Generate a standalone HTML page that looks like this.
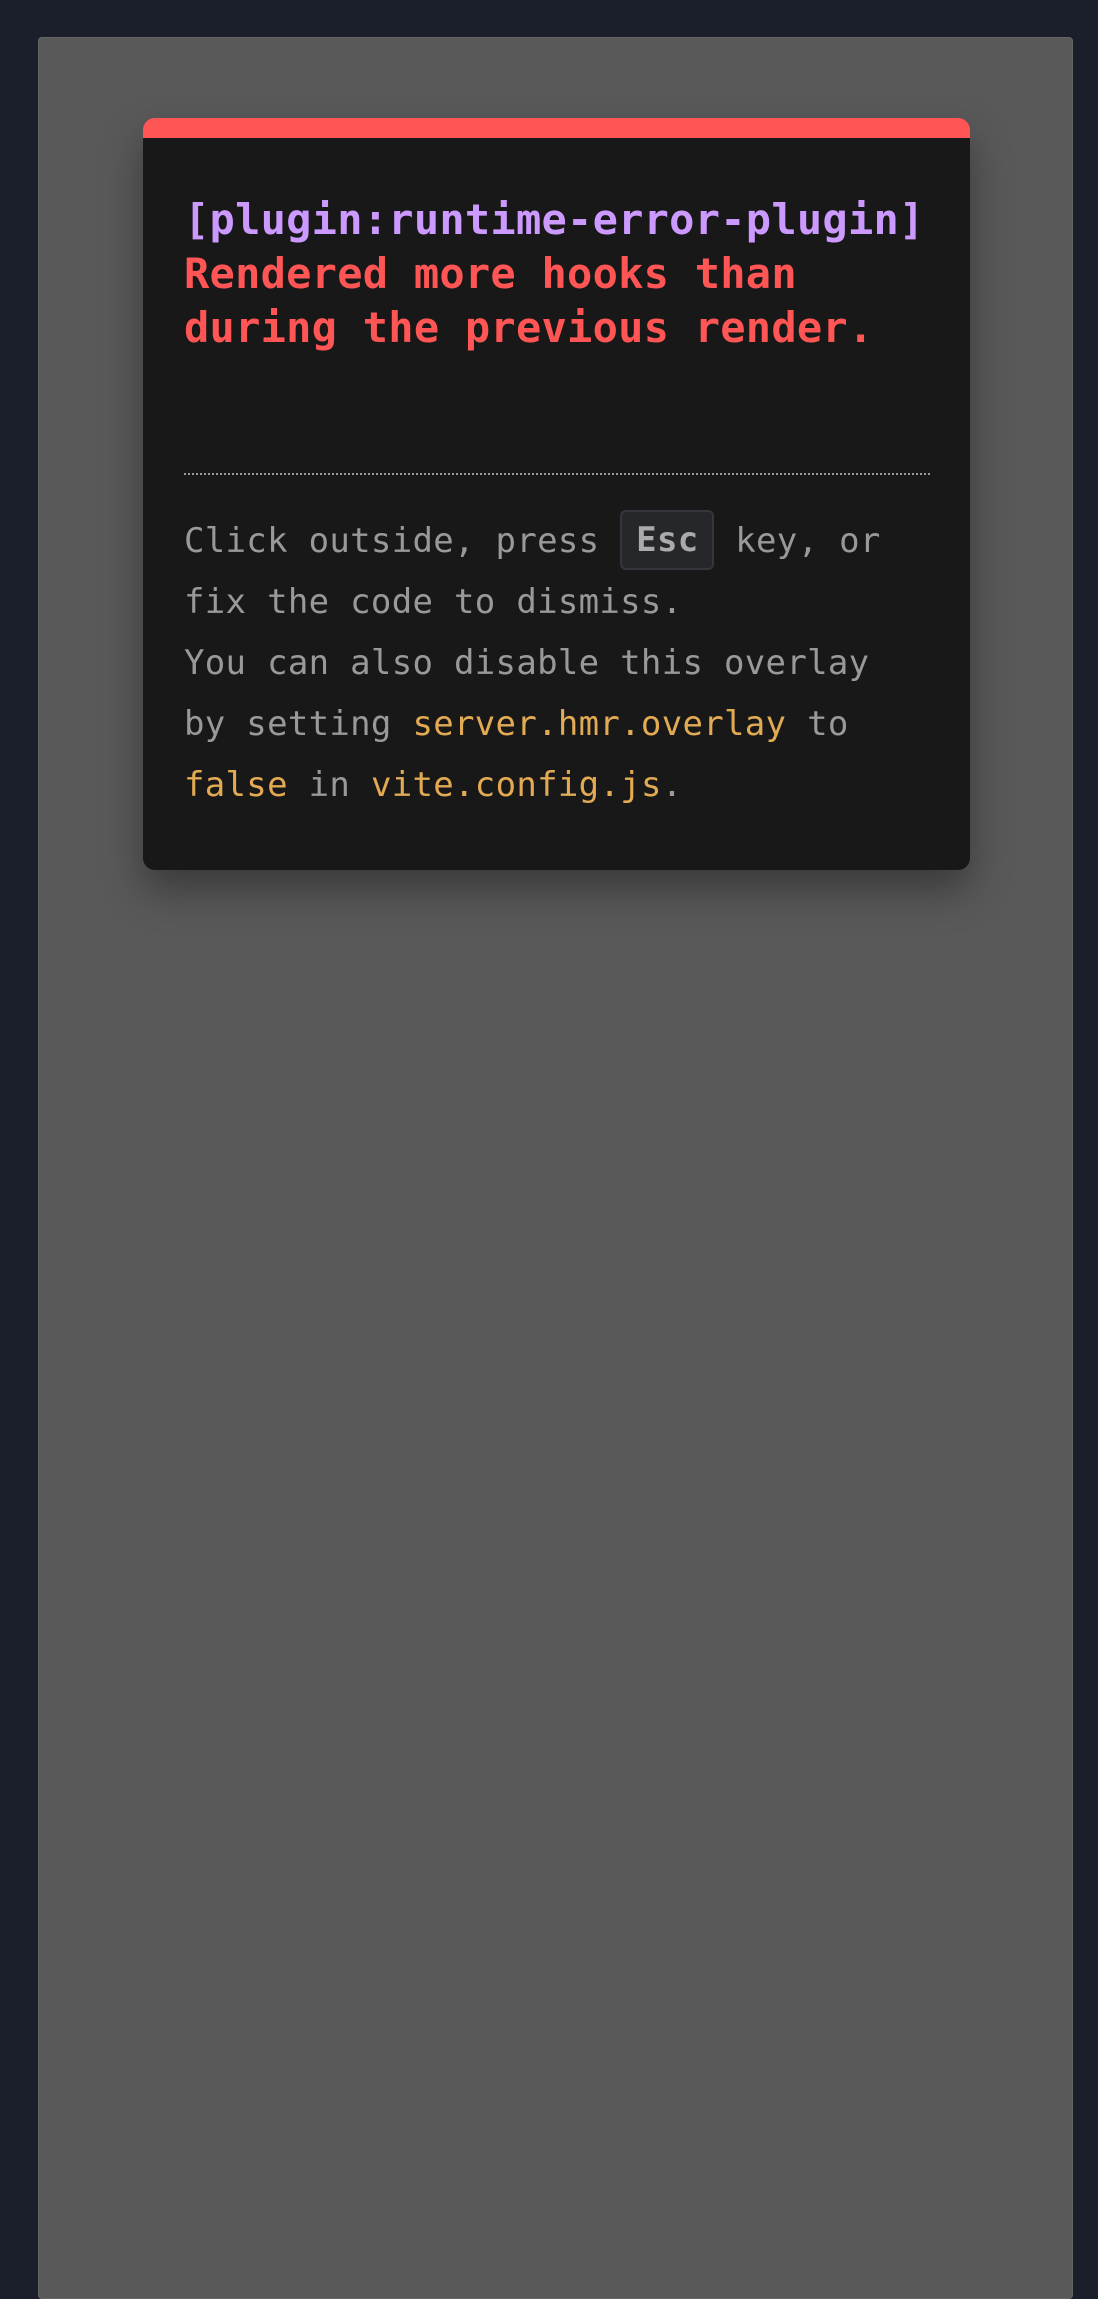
<!DOCTYPE html>
<html><head><meta charset="utf-8"><style>
html,body{margin:0;padding:0;background:#1b1f2b;width:1098px;height:2272px;overflow:hidden}
.panel{position:absolute;left:38px;top:37px;width:1033px;height:2260px;background:#595959;border-radius:4px;border:1px solid #666}
.card{position:absolute;left:143px;top:118px;width:827px;height:752px;background:#181818;border-radius:12px;border-top:20px solid #ff5555;box-sizing:border-box;box-shadow:0 20px 40px rgba(0,0,0,.35);font-family:"DejaVu Sans Mono","Liberation Mono",monospace}
.title{position:absolute;left:41px;top:55px;font-size:42px;line-height:54px;font-weight:bold;color:#ff5555;white-space:pre;letter-spacing:0.25px}
.p{color:#cc99ff}
.sep{position:absolute;left:41px;top:335px;width:746px;border-top:2px dotted #999}
.body{position:absolute;left:41px;top:373px;font-size:34px;line-height:61px;color:#999;white-space:pre;letter-spacing:0.3px}
.y{color:#e2aa53}
.kbd{display:inline-block;background:#26272b;border:2px solid #34363b;border-radius:6px;color:#aaa;font-weight:bold;line-height:56px;padding:0 14px;vertical-align:middle;margin-top:-6px}
</style></head><body>
<div class="panel"></div>
<div class="card">
<div class="title"><span class="p">[plugin:runtime-error-plugin]</span>
Rendered more hooks than
during the previous render.</div>
<div class="sep"></div>
<div class="body">Click outside, press <span class="kbd">Esc</span> key, or
fix the code to dismiss.
You can also disable this overlay
by setting <span class="y">server.hmr.overlay</span> to
<span class="y">false</span> in <span class="y">vite.config.js</span>.</div>
</div>
</body></html>
